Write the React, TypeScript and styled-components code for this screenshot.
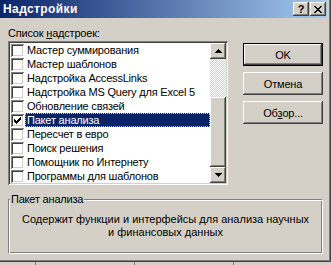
import React from 'react';
import styled, { createGlobalStyle } from 'styled-components';

const GlobalStyle = createGlobalStyle`
  * {
    box-sizing: border-box;
  }

  body {
    margin: 0;
    background: #d4d0c8;
    font-family: 'Liberation Sans', Arial, sans-serif;
    font-size: 11px;
    letter-spacing: -0.2px;
    color: #000;
  }
`;

const Screen = styled.div`
  width: 331px;
  height: 265px;
  overflow: hidden;
  display: flex;
  flex-direction: column;
`;

const Dialog = styled.div`
  height: 262px;
  display: flex;
  flex-direction: column;
  padding: 0 4px 4px 0;
  background: #d4d0c8;
  box-shadow: inset -1px -1px #404040, inset -2px -2px #808080;
`;

const TitleBar = styled.div`
  height: 18px;
  display: flex;
  align-items: center;
  justify-content: space-between;
  padding: 0 1px 0 3px;
  background: linear-gradient(to right, #0a246a, #a6caf0);
`;

const Title = styled.span`
  color: #fff;
  font-weight: bold;
  font-size: 12px;
  letter-spacing: 0.4px;
`;

const TitleButtons = styled.div`
  display: flex;
  gap: 1px;
`;

const TitleButton = styled.div`
  width: 16px;
  height: 14px;
  background: #d4d0c8;
  display: flex;
  align-items: center;
  justify-content: center;
  box-shadow: inset -1px -1px #404040, inset 1px 1px #fff, inset -2px -2px #808080;
  font-weight: bold;
  font-size: 11px;
  line-height: 1;
`;

const Body = styled.div`
  flex: 1;
  display: flex;
  flex-direction: column;
  padding: 0 0 0 8px;
`;

const Top = styled.div`
  display: flex;
  gap: 15px;
`;

const ListColumn = styled.div`
  display: flex;
  flex-direction: column;
  padding-top: 9px;
  gap: 1px;
`;

const Label = styled.div`
  height: 13px;
  line-height: 13px;
`;

const ListBox = styled.div`
  width: 220px;
  height: 144px;
  padding: 2px;
  background: #fff;
  display: flex;
  box-shadow: inset 1px 1px #808080, inset -1px -1px #fff, inset 2px 2px #404040,
    inset -2px -2px #d4d0c8;
`;

const Items = styled.div`
  flex: 1;
  display: flex;
  flex-direction: column;
`;

const Row = styled.div`
  height: 14px;
  display: flex;
  align-items: center;
  padding-left: 1px;
`;

const Check = styled.div`
  width: 13px;
  height: 13px;
  flex: none;
  background: #fff;
  display: flex;
  align-items: center;
  justify-content: center;
  box-shadow: inset 1px 1px #808080, inset -1px -1px #fff, inset 2px 2px #404040,
    inset -2px -2px #d4d0c8;
`;

const ItemText = styled.div<{ $selected?: boolean }>`
  margin-left: 1px;
  flex: 1;
  height: 14px;
  line-height: 12px;
  padding-left: 1px;
  white-space: nowrap;
  border: 1px ${(p) => (p.$selected ? 'dotted #d8c878' : 'solid transparent')};
  background: ${(p) => (p.$selected ? '#0a246a' : 'transparent')};
  color: ${(p) => (p.$selected ? '#fff' : '#000')};
`;

const ScrollBar = styled.div`
  width: 16px;
  display: flex;
  flex-direction: column;
`;

const ArrowButton = styled.div`
  width: 16px;
  height: 16px;
  flex: none;
  background: #d4d0c8;
  display: flex;
  align-items: center;
  justify-content: center;
  box-shadow: inset -1px -1px #404040, inset 1px 1px #fff, inset -2px -2px #808080;
`;

const Track = styled.div<{ $height: number }>`
  height: ${(p) => p.$height}px;
  flex: none;
  background: repeating-conic-gradient(#fff 0 25%, #d4d0c8 0 50%) 0 0 / 2px 2px;
`;

const Thumb = styled.div<{ $height: number }>`
  height: ${(p) => p.$height}px;
  flex: none;
  background: #d4d0c8;
  box-shadow: inset -1px -1px #404040, inset 1px 1px #fff, inset -2px -2px #808080;
`;

const ButtonColumn = styled.div`
  display: flex;
  flex-direction: column;
  gap: 6px;
  padding-top: 25px;
`;

const Button = styled.div<{ $default?: boolean }>`
  width: 80px;
  height: 23px;
  display: flex;
  align-items: center;
  justify-content: center;
  background: #d4d0c8;
  box-shadow: ${(p) =>
    p.$default
      ? 'inset 0 0 0 1px #000, inset -2px -2px #404040, inset 2px 2px #fff, inset -3px -3px #808080'
      : 'inset -1px -1px #404040, inset 1px 1px #fff, inset -2px -2px #808080'};
`;

const GroupBox = styled.div`
  position: relative;
  margin: 14px 4px 0 0;
  height: 55px;
  padding-top: 13px;
  border: 1px solid #808080;
  border-right-color: #fff;
  border-bottom-color: #fff;
  box-shadow: inset 1px 1px #fff, inset -1px -1px #808080;
`;

const GroupLabel = styled.span`
  position: absolute;
  left: 1px;
  top: -7px;
  padding: 0 1px;
  line-height: 13px;
  background: #d4d0c8;
`;

const Description = styled.div`
  text-align: center;
  line-height: 13px;
  letter-spacing: 0;
`;

const BelowStrip = styled.div`
  flex: 1;
  background: repeating-linear-gradient(
      to right,
      transparent 0 35px,
      #808080 35px 36px,
      transparent 36px 99px
    )
    #d4d0c8;
`;

const CheckMark = () => (
  <svg width="7" height="7" viewBox="0 0 7 7" shapeRendering="crispEdges">
    <path
      d="M0 2h1v3h-1z M1 3h1v3h-1z M2 4h1v3h-1z M3 3h1v3h-1z M4 2h1v3h-1z M5 1h1v3h-1z M6 0h1v3h-1z"
      fill="#000"
    />
  </svg>
);

const Arrow = ({ down }: { down?: boolean }) => (
  <svg width="7" height="4" viewBox="0 0 7 4" shapeRendering="crispEdges">
    <path
      d={down ? 'M0 0h7v1h-7z M1 1h5v1h-5z M2 2h3v1h-3z M3 3h1v1h-1z' : 'M3 0h1v1h-1z M2 1h3v1h-3z M1 2h5v1h-5z M0 3h7v1h-7z'}
      fill="#000"
    />
  </svg>
);

const CloseGlyph = () => (
  <svg width="8" height="7" viewBox="0 0 8 7" shapeRendering="crispEdges">
    <path
      d="M0 0h2v1h-2z M6 0h2v1h-2z M1 1h2v1h-2z M5 1h2v1h-2z M2 2h4v1h-4z M3 3h2v1h-2z M2 4h4v1h-4z M1 5h2v1h-2z M5 5h2v1h-2z M0 6h2v1h-2z M6 6h2v1h-2z"
      fill="#000"
    />
  </svg>
);

const addIns = [
  { name: 'Мастер суммирования' },
  { name: 'Мастер шаблонов' },
  { name: 'Надстройка AccessLinks' },
  { name: 'Надстройка MS Query для Excel 5' },
  { name: 'Обновление связей' },
  { name: 'Пакет анализа', checked: true, selected: true },
  { name: 'Пересчет в евро' },
  { name: 'Поиск решения' },
  { name: 'Помощник по Интернету' },
  { name: 'Программы для шаблонов' },
];

export default function App() {
  return (
    <Screen>
      <GlobalStyle />
      <Dialog>
        <TitleBar>
          <Title>Надстройки</Title>
          <TitleButtons>
            <TitleButton>?</TitleButton>
            <TitleButton>
              <CloseGlyph />
            </TitleButton>
          </TitleButtons>
        </TitleBar>
        <Body>
          <Top>
            <ListColumn>
              <Label>
                Список <u>н</u>адстроек:
              </Label>
              <ListBox>
                <Items>
                  {addIns.map((item) => (
                    <Row key={item.name}>
                      <Check>{item.checked && <CheckMark />}</Check>
                      <ItemText $selected={item.selected}>{item.name}</ItemText>
                    </Row>
                  ))}
                </Items>
                <ScrollBar>
                  <ArrowButton>
                    <Arrow />
                  </ArrowButton>
                  <Track $height={38} />
                  <Thumb $height={70} />
                  <ArrowButton>
                    <Arrow down />
                  </ArrowButton>
                </ScrollBar>
              </ListBox>
            </ListColumn>
            <ButtonColumn>
              <Button $default>OK</Button>
              <Button>Отмена</Button>
              <Button>
                Об<u>з</u>ор...
              </Button>
            </ButtonColumn>
          </Top>
          <GroupBox>
            <GroupLabel>Пакет анализа</GroupLabel>
            <Description>
              Содержит функции и интерфейсы для анализа научных
              <br />
              и финансовых данных
            </Description>
          </GroupBox>
        </Body>
      </Dialog>
      <BelowStrip />
    </Screen>
  );
}
